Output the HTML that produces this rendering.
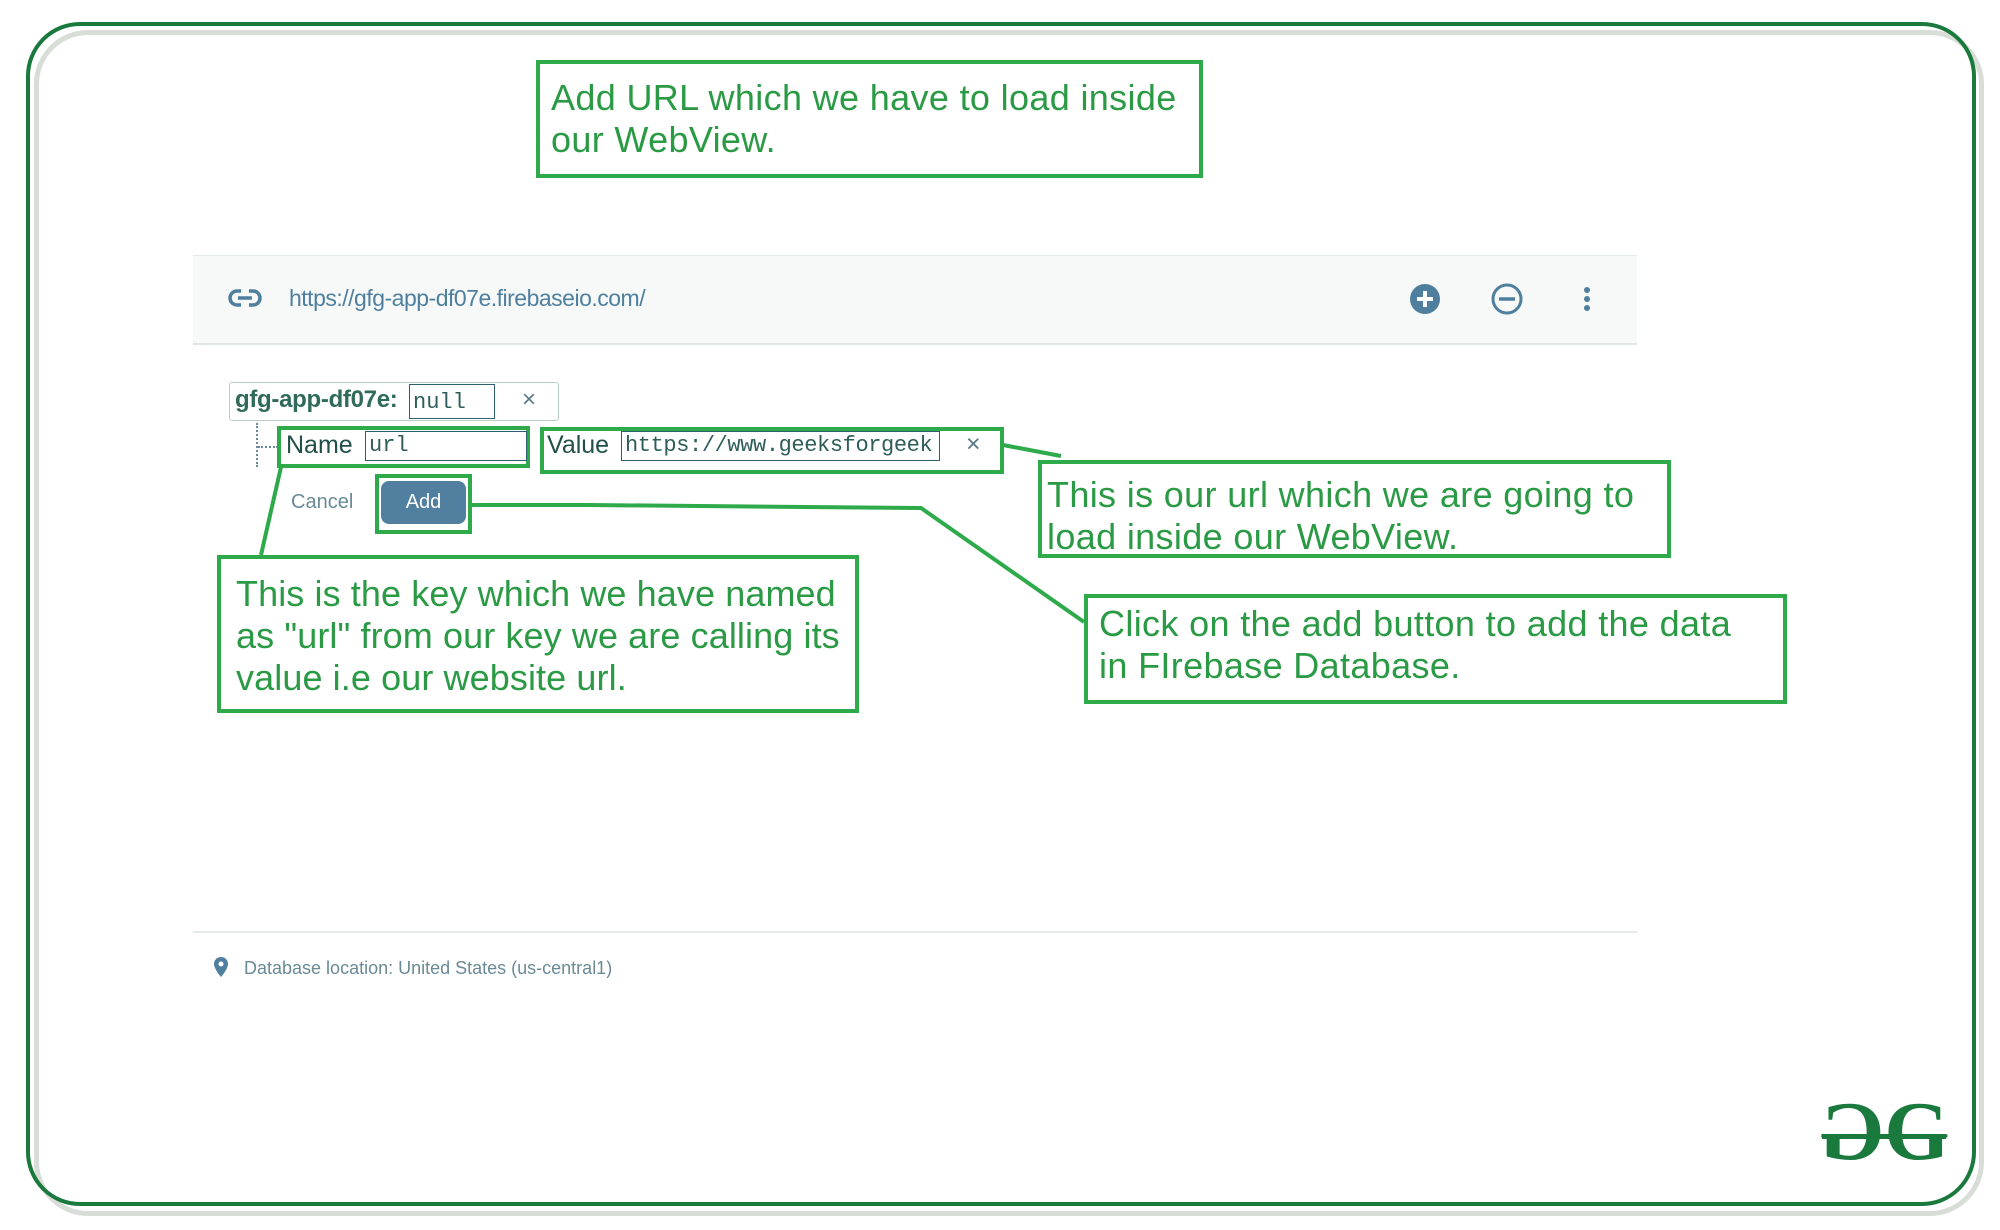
<!DOCTYPE html>
<html><head><meta charset="utf-8"><style>
body{margin:0;width:2000px;height:1230px;background:#fff;position:relative;overflow:hidden;font-family:"Liberation Sans",sans-serif}
.a{position:absolute}
.gb{position:absolute;border:4px solid #2eaa4a;box-sizing:border-box}
.t{position:absolute;font-size:36px;line-height:42px;color:#2a9a45;white-space:nowrap;letter-spacing:0.35px}
.mono{font-family:"Liberation Mono",monospace}
</style></head><body>
<div class="a" style="left:34px;top:30px;width:1950px;height:1186px;border:5px solid #d8ddd8;border-radius:54px;box-sizing:border-box"></div>
<div class="a" style="left:26px;top:22px;width:1950px;height:1184px;border:4px solid #1a7a3e;border-radius:54px;box-sizing:border-box"></div>

<div class="gb" style="left:536px;top:60px;width:667px;height:118px"></div>
<div class="t" style="left:551px;top:77px">Add URL which we have to load inside<br>our WebView.</div>

<div class="a" style="left:193px;top:255px;width:1444px;height:87px;background:#f7f9f8;border-top:1px solid #e4ebe6;border-bottom:2px solid #e0e6e2"></div>
<svg class="a" style="left:228px;top:286px" width="34" height="24" viewBox="0 0 34 24"><path d="M13 5H9a7 7 0 0 0 0 14h4M21 5h4a7 7 0 0 1 0 14h-4M10 12h14" stroke="#4f7f9e" stroke-width="3.5" fill="none"/></svg>
<div class="a" style="left:289px;top:285px;font-size:23px;color:#4f7f9e;letter-spacing:-0.5px">https://gfg-app-df07e.firebaseio.com/</div>
<svg class="a" style="left:1408px;top:282px" width="200" height="34"><circle cx="17" cy="17" r="15" fill="#4f7f9e"/><path d="M17 9v16M9 17h16" stroke="#fff" stroke-width="4"/><circle cx="99" cy="17" r="14" fill="none" stroke="#4f7f9e" stroke-width="3"/><path d="M91 17h16" stroke="#4f7f9e" stroke-width="3.5"/><circle cx="179" cy="8" r="3" fill="#4f7f9e"/><circle cx="179" cy="17" r="3" fill="#4f7f9e"/><circle cx="179" cy="26" r="3" fill="#4f7f9e"/></svg>

<div class="a" style="left:229px;top:382px;width:330px;height:39px;border:1px solid #b8d0c4;border-radius:3px;box-sizing:border-box"></div>
<div class="a" style="left:235px;top:386px;font-size:24px;font-weight:bold;color:#2f6a5a;letter-spacing:-0.3px">gfg-app-df07e:</div>
<div class="a mono" style="left:409px;top:384px;width:86px;height:35px;border:1px solid #2f5e6e;box-sizing:border-box;font-size:22px;padding:5px 3px;color:#2f5e5a">null</div>
<div class="a" style="left:522px;top:386px;font-size:24px;color:#5a7a8a">×</div>
<div class="a" style="left:256px;top:423px;height:44px;border-left:2px dotted #6a8a9a"></div>
<div class="a" style="left:258px;top:446px;width:20px;border-top:2px dotted #6a8a9a"></div>
<div class="gb" style="left:277px;top:426px;width:253px;height:42px"></div>
<div class="a" style="left:286px;top:431px;font-size:25px;color:#224f4a">Name</div>
<div class="a mono" style="left:365px;top:431px;width:162px;height:30px;border:1px solid #2f5e6e;box-sizing:border-box;font-size:22px;padding:1px 3px;color:#2f5e5a">url</div>
<div class="gb" style="left:540px;top:427px;width:464px;height:47px"></div>
<div class="a" style="left:547px;top:431px;font-size:25px;color:#224f4a">Value</div>
<div class="a mono" style="left:621px;top:431px;width:319px;height:30px;border:1px solid #2f5e6e;box-sizing:border-box;font-size:22px;padding:1px 3px;color:#2f5e5a;overflow:hidden;white-space:nowrap;letter-spacing:-0.4px">https://www.geeksforgeek</div>
<div class="a" style="left:966px;top:430px;font-size:25px;color:#5a7a8a">×</div>
<div class="a" style="left:291px;top:491px;font-size:20px;color:#6a8a96">Cancel</div>
<div class="gb" style="left:375px;top:474px;width:97px;height:60px"></div>
<div class="a" style="left:381px;top:481px;width:85px;height:43px;background:#517f9f;border-radius:8px;color:#fff;font-size:20px;line-height:43px;text-align:center">Add</div>

<svg class="a" style="left:0;top:0" width="2000" height="1230"><g stroke="#2eaa4a" stroke-width="4" fill="none"><path d="M281 467L261 555"/><path d="M1003 445L1061 456"/><path d="M471 505H587L921 508L1084 622"/></g></svg>

<div class="gb" style="left:217px;top:555px;width:642px;height:158px"></div>
<div class="t" style="left:236px;top:573px;letter-spacing:0.1px">This is the key which we have named<br>as "url" from our key we are calling its<br>value i.e our website url.</div>
<div class="gb" style="left:1038px;top:460px;width:633px;height:98px"></div>
<div class="t" style="left:1047px;top:474px">This is our url which we are going to<br>load inside our WebView.</div>
<div class="gb" style="left:1084px;top:594px;width:703px;height:110px"></div>
<div class="t" style="left:1099px;top:603px">Click on the add button to add the data<br>in FIrebase Database.</div>

<div class="a" style="left:193px;top:931px;width:1444px;border-top:2px solid #e6ebe8"></div>
<svg class="a" style="left:213px;top:956px" width="16" height="22"><path d="M8 1a7 7 0 0 0-7 7c0 5 7 13 7 13s7-8 7-13a7 7 0 0 0-7-7z" fill="#4f7f9e"/><circle cx="8" cy="8" r="2.5" fill="#fff"/></svg>
<div class="a" style="left:244px;top:958px;font-size:18px;color:#6a8a96">Database location: United States (us-central1)</div>

<div class="a" style="left:1823px;top:1090px;font-family:'Liberation Serif',serif;font-size:84px;line-height:84px;color:#1a7a3e;letter-spacing:-4px;font-weight:bold"><span style="display:inline-block;transform:scaleX(-1)">G</span><span>G</span></div>
<div class="a" style="left:1822px;top:1134px;width:124px;height:5px;background:#1a7a3e"></div>
</body></html>
